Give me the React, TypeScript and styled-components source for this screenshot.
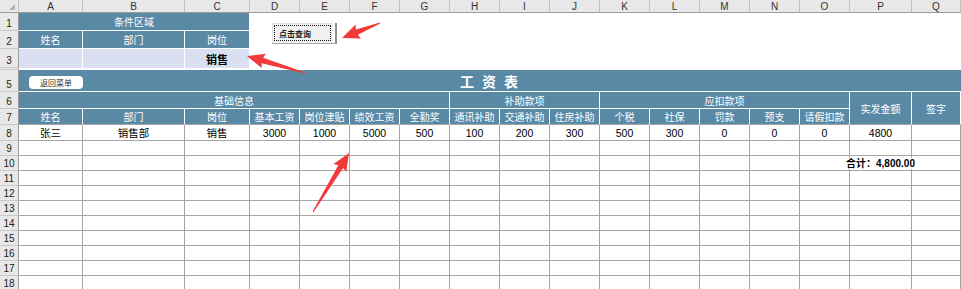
import React from 'react';
import styled, { createGlobalStyle, css } from 'styled-components';

const BLUE = '#5a89a6';
const PALE = '#dae0f1';
const GRID = '#a6a6a6';
const HEAD_BG = '#e8e8e8';

const GlobalStyle = createGlobalStyle`
  html, body {
    margin: 0;
    padding: 0;
    background: #fff;
    overflow: hidden;
  }
  body {
    font-family: "Liberation Sans", "Noto Sans CJK SC", sans-serif;
  }
`;

const COLS = 'ABCDEFGHIJKLMNOPQ'.split('');
const ROWS = Array.from({ length: 18 }, (_, i) => i + 1);

const ROW8 = ['张三', '销售部', '销售', '3000', '1000', '5000', '500', '100', '200', '300', '500', '300', '0', '0', '0', '4800', ''];
const ROW7 = ['姓名', '部门', '岗位', '基本工资', '岗位津贴', '绩效工资', '全勤奖', '通讯补助', '交通补助', '住房补助', '个税', '社保', '罚款', '预支', '请假扣款'];

type Place = { $col: number; $row: number; $cs?: number; $rs?: number };

// excel col A = 0 sits in grid column 2, excel row n in grid row n + 1
const placed = css<Place>`
  grid-column: ${(p) => p.$col + 2} / span ${(p) => p.$cs ?? 1};
  grid-row: ${(p) => p.$row + 1} / span ${(p) => p.$rs ?? 1};
`;

type Pt = [number, number];

function arrowPoints(tail: Pt, tip: Pt, headLen: number, headHalf: number) {
  const [tx, ty] = tail;
  const [px, py] = tip;
  const len = Math.hypot(px - tx, py - ty);
  const ux = (px - tx) / len;
  const uy = (py - ty) / len;
  const nx = -uy;
  const ny = ux;
  const bx = px - ux * headLen;
  const by = py - uy * headLen;
  const tailHalf = 0.6;
  const neck = 2.8;
  const pts: Pt[] = [
    [tx + nx * tailHalf, ty + ny * tailHalf],
    [bx + nx * neck, by + ny * neck],
    [bx + nx * headHalf - ux * 1.5, by + ny * headHalf - uy * 1.5],
    [px, py],
    [bx - nx * headHalf - ux * 1.5, by - ny * headHalf - uy * 1.5],
    [bx - nx * neck, by - ny * neck],
    [tx - nx * tailHalf, ty - ny * tailHalf],
  ];
  return pts.map(([x, y]) => `${x.toFixed(1)},${y.toFixed(1)}`).join(' ');
}

const ARROWS: { tail: Pt; tip: Pt }[] = [
  { tail: [380, 23], tip: [342, 38] },
  { tail: [305, 73], tip: [247, 56] },
  { tail: [313, 212], tip: [349, 153] },
];

function Arrows() {
  return (
    <ArrowLayer width="961" height="289" viewBox="0 0 961 289">
      {ARROWS.map((a, i) => (
        <polygon key={i} points={arrowPoints(a.tail, a.tip, 16, 7.5)} fill="#f23a3a" />
      ))}
    </ArrowLayer>
  );
}

export default function App() {
  return (
    <>
      <GlobalStyle />
      <Page>
        <Sheet>
          <Corner>
            <CornerMark />
          </Corner>
          {COLS.map((c, i) => (
            <ColHead key={c} $col={i} $row={0}>
              {c}
            </ColHead>
          ))}
          {ROWS.map((r) => (
            <RowHead key={r} $col={-1} $row={r}>
              {r === 4 ? '' : r}
            </RowHead>
          ))}

          <HeadCell $col={0} $row={1} $cs={3}>条件区域</HeadCell>
          <HeadCell $col={0} $row={2}>姓名</HeadCell>
          <HeadCell $col={1} $row={2}>部门</HeadCell>
          <HeadCell $col={2} $row={2}>岗位</HeadCell>
          <CondCell $col={0} $row={3} />
          <CondCell $col={1} $row={3} />
          <CondCell $col={2} $row={3} $bold>销售</CondCell>
          <Blank $col={0} $row={4} $cs={3} />
          <Blank $col={3} $row={1} $cs={14} $rs={4}>
            <QueryButton>
              <QueryFace>点击查询</QueryFace>
            </QueryButton>
          </Blank>

          <TitleCell $col={0} $row={5} $cs={17}>
            <MenuButton>返回菜单</MenuButton>
            工 资 表
          </TitleCell>

          <HeadCell $col={0} $row={6} $cs={7}>基础信息</HeadCell>
          <HeadCell $col={7} $row={6} $cs={3}>补助款项</HeadCell>
          <HeadCell $col={10} $row={6} $cs={5}>应扣款项</HeadCell>
          <HeadCell $col={15} $row={6} $rs={2} $gray>实发金额</HeadCell>
          <HeadCell $col={16} $row={6} $rs={2} $gray>签字</HeadCell>
          {ROW7.map((t, i) => (
            <HeadCell key={t} $col={i} $row={7} $gray>
              {t}
            </HeadCell>
          ))}

          {ROW8.map((v, i) => (
            <DataCell key={i} $col={i} $row={8}>
              {v}
            </DataCell>
          ))}
          {ROWS.filter((r) => r >= 9).map((r) =>
            COLS.map((c, i) =>
              r === 10 && c === 'P' ? (
                <DataCell key={c + r} $col={i} $row={r}>
                  <Total>合计：4,800.00</Total>
                </DataCell>
              ) : (
                <DataCell key={c + r} $col={i} $row={r} />
              ),
            ),
          )}
        </Sheet>
        <Arrows />
      </Page>
    </>
  );
}

const Page = styled.div`
  position: relative;
  width: 961px;
  height: 289px;
  overflow: hidden;
`;

const Sheet = styled.div`
  display: grid;
  grid-template-columns: 19px 64px 102px 65px repeat(12, 50px) 62px 49px;
  grid-template-rows: 13px 18px 18px 19px 2px 22px 17px 16px 16px repeat(10, 15px);
  font-size: 10px;
  color: #000;
`;

const Corner = styled.div`
  grid-column: 1;
  grid-row: 1;
  display: flex;
  align-items: flex-end;
  justify-content: flex-end;
  padding: 0 3px 2px 0;
  background: ${HEAD_BG};
  border-right: 1px solid #c4c4c4;
  border-bottom: 1px solid #9b9b9b;
  box-sizing: border-box;
`;

const CornerMark = styled.div`
  width: 0;
  height: 0;
  border-left: 6px solid transparent;
  border-bottom: 6px solid #b5b5b5;
`;

const ColHead = styled.div<Place>`
  ${placed};
  display: flex;
  align-items: center;
  justify-content: center;
  box-sizing: border-box;
  background: ${HEAD_BG};
  border-right: 1px solid #c4c4c4;
  border-bottom: 1px solid #9b9b9b;
  font-size: 10px;
  color: #333;
`;

const RowHead = styled.div<Place>`
  ${placed};
  display: flex;
  align-items: flex-end;
  justify-content: center;
  box-sizing: border-box;
  padding-bottom: 1px;
  background: ${HEAD_BG};
  border-right: 1px solid #9b9b9b;
  border-bottom: 1px solid #c9c9c9;
  font-size: 10px;
  line-height: 11px;
  color: #222;
  overflow: hidden;
`;

const cellBase = css`
  display: flex;
  align-items: center;
  justify-content: center;
  box-sizing: border-box;
  white-space: nowrap;
`;

const HeadCell = styled.div<Place & { $gray?: boolean }>`
  ${placed};
  ${cellBase};
  background: ${BLUE};
  color: #fff;
  font-size: 10px;
  border-right: 1px solid #fff;
  border-bottom: 1px solid ${(p) => (p.$gray ? GRID : '#fff')};
`;

const CondCell = styled.div<Place & { $bold?: boolean }>`
  ${placed};
  ${cellBase};
  background: ${PALE};
  border-right: 1px solid #fff;
  font-size: 11px;
  font-weight: ${(p) => (p.$bold ? 700 : 400)};
`;

const Blank = styled.div<Place>`
  ${placed};
  display: flex;
  align-items: flex-start;
  padding: 10px 0 0 22px;
  background: #fff;
`;

const QueryButton = styled.div`
  display: flex;
  padding-right: 2px;
  border-right: 2px solid #8f8f8f;
  border-bottom: 1px solid #a9a9a9;
  background: #fff;
`;

const QueryFace = styled.div`
  width: 61px;
  height: 20px;
  box-sizing: border-box;
  display: flex;
  align-items: center;
  padding-left: 6px;
  background: #f0f0f0;
  border-top: 1px solid #e2e2e2;
  border-left: 1px solid #e2e2e2;
  outline: 1px dotted #111;
  outline-offset: -3px;
  font-size: 8px;
  font-weight: 700;
  color: #1a1a1a;
`;

const TitleCell = styled.div<Place>`
  ${placed};
  ${cellBase};
  position: relative;
  background: ${BLUE};
  border-bottom: 1px solid #fff;
  color: #fff;
  font-size: 14px;
  font-weight: 700;
  letter-spacing: 2px;
`;

const MenuButton = styled.div`
  position: absolute;
  left: 10px;
  top: 6px;
  width: 54px;
  height: 13px;
  display: flex;
  align-items: center;
  justify-content: center;
  border-radius: 4px;
  background: #fff;
  color: #333;
  font-size: 8px;
  font-weight: 400;
  letter-spacing: 0;
`;

const DataCell = styled.div<Place>`
  ${placed};
  ${cellBase};
  overflow: visible;
  background: #fff;
  border-right: 1px solid ${GRID};
  border-bottom: 1px solid ${GRID};
  font-size: 10.5px;
`;

const Total = styled.span`
  position: relative;
  z-index: 1;
  background: #fff;
  font-size: 10px;
  line-height: 11px;
  font-weight: 700;
`;

const ArrowLayer = styled.svg`
  position: absolute;
  left: 0;
  top: 0;
  pointer-events: none;
`;
